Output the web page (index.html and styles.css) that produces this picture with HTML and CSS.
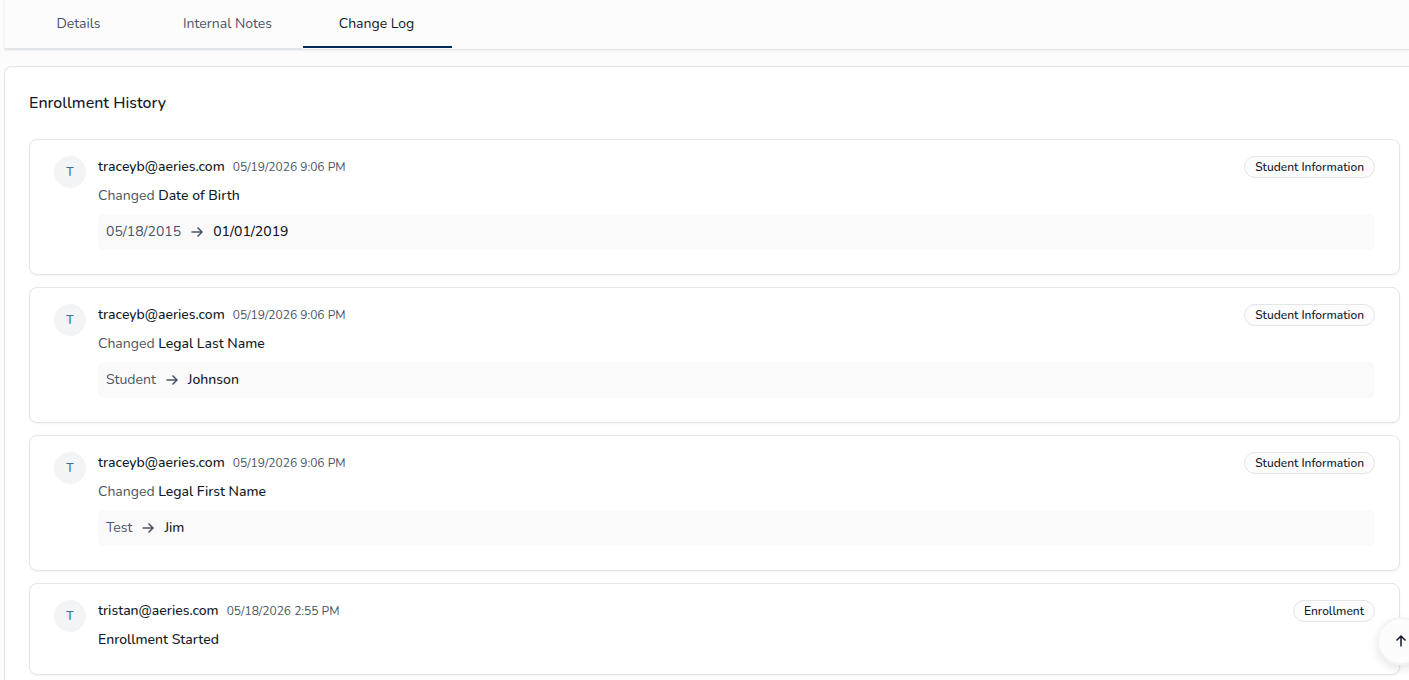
FILE: index.html
```html
<!DOCTYPE html>
<html lang="en">
<head>
  <meta charset="UTF-8">
  <meta name="viewport" content="width=device-width, initial-scale=1.0">
  <title>Change Log</title>
  <link rel="stylesheet" href="styles.css">
</head>
<body>
  <div class="tabs" role="tablist">
    <button class="tab" role="tab">Details</button>
    <button class="tab" role="tab">Internal Notes</button>
    <button class="tab active" role="tab" aria-selected="true">Change Log</button>
  </div>

  <main class="panel">
    <h1>Enrollment History</h1>

    <div class="log">
      <article class="entry">
        <div class="avatar">T</div>
        <div class="entry-body">
          <div class="entry-head">
            <span class="user">traceyb@aeries.com</span>
            <time>05/19/2026 9:06 PM</time>
            <span class="badge">Student Information</span>
          </div>
          <p>Changed <strong>Date of Birth</strong></p>
          <div class="diff">
            <span>05/18/2015</span>
            <svg class="arrow" viewBox="0 0 16 16"><path d="M2.5 8h10.5M8.5 3.5L13 8l-4.500 4.500"/></svg>
            <strong>01/01/2019</strong>
          </div>
        </div>
      </article>

      <article class="entry">
        <div class="avatar">T</div>
        <div class="entry-body">
          <div class="entry-head">
            <span class="user">traceyb@aeries.com</span>
            <time>05/19/2026 9:06 PM</time>
            <span class="badge">Student Information</span>
          </div>
          <p>Changed <strong>Legal Last Name</strong></p>
          <div class="diff">
            <span>Student</span>
            <svg class="arrow" viewBox="0 0 16 16"><path d="M2.5 8h10.5M8.5 3.5L13 8l-4.500 4.500"/></svg>
            <strong>Johnson</strong>
          </div>
        </div>
      </article>

      <article class="entry">
        <div class="avatar">T</div>
        <div class="entry-body">
          <div class="entry-head">
            <span class="user">traceyb@aeries.com</span>
            <time>05/19/2026 9:06 PM</time>
            <span class="badge">Student Information</span>
          </div>
          <p>Changed <strong>Legal First Name</strong></p>
          <div class="diff">
            <span>Test</span>
            <svg class="arrow" viewBox="0 0 16 16"><path d="M2.5 8h10.5M8.5 3.5L13 8l-4.500 4.500"/></svg>
            <strong>Jim</strong>
          </div>
        </div>
      </article>

      <article class="entry">
        <div class="avatar">T</div>
        <div class="entry-body">
          <div class="entry-head">
            <span class="user">tristan@aeries.com</span>
            <time>05/18/2026 2:55 PM</time>
            <span class="badge">Enrollment</span>
          </div>
          <p><strong>Enrollment Started</strong></p>
        </div>
      </article>
    </div>
  </main>

  <button class="to-top" aria-label="Back to top">
    <svg viewBox="0 0 16 16"><path d="M8 13.500V3M3.500 7.500L8 3l4.500 4.500"/></svg>
  </button>

  <script>
    document.querySelector('.to-top').addEventListener('click', function() {
      window.scrollTo({ top: 0, behavior: 'smooth' });
    });
  </script>
</body>
</html>
```
FILE: styles.css
```css
:root {
  --bg: #fcfcfc;
  --card: #fff;
  --text: #111827;
  --muted: #4a5565;
  --border: #e4e5ea;
  --accent: #002b5c;
}

* {
  box-sizing: border-box;
}

body {
  margin: 0;
  padding-left: 4px;
  font-family: "Nunito", "Nunito Sans", Lato, sans-serif;
  font-size: 14px;
  line-height: 20px;
  background: var(--bg);
  color: var(--text);
  overflow-x: hidden;
}

button {
  font: inherit;
  cursor: pointer;
}

.tabs {
  display: flex;
  align-items: flex-start;
  height: 50px;
  border-left: 1px solid #f3f4f6;
  border-bottom: 1px solid #e1e5e9;
  box-shadow: 0 1px 2px rgba(0,0,0,0.06);
}

.tab {
  width: 149px;
  height: 49px;
  padding: 0 2px 1px 0;
  border: none;
  border-bottom: 1px solid #e1e5e9;
  background: none;
  color: var(--muted);
}

.tab.active {
  height: 48px;
  padding: 2px 2px 0 0;
  color: var(--text);
  border-bottom: 2px solid var(--accent);
}

.panel {
  margin-top: 16px;
  padding: 24px 9px 24px 24px;
  background: var(--card);
  border: 1px solid var(--border);
  border-right: none;
  border-radius: 8px 0 0 8px;
}

h1 {
  margin: 0 0 24px;
  font-size: 16px;
  font-weight: 500;
  line-height: 24px;
}

.log {
  display: grid;
  gap: 12px;
}

.entry {
  display: flex;
  gap: 12px;
  padding: 16px 24px 24px;
  background: var(--card);
  border: 1px solid var(--border);
  border-radius: 8px;
  box-shadow: 0 1px 2px rgba(0,0,0,0.05);
}

.avatar {
  display: flex;
  align-items: center;
  justify-content: center;
  width: 32px;
  height: 32px;
  border-radius: 50%;
  background: #f3f4f6;
  color: #40719b;
  font-size: 12px;
  font-weight: 600;
}

.entry-body {
  flex: 1;
}

.entry-head {
  display: flex;
  align-items: center;
  gap: 8px;
}

.user {
  font-weight: 500;
}

time {
  color: var(--muted);
  font-size: 12px;
}

.badge {
  margin-left: auto;
  padding: 0 10px;
  border: 1px solid var(--border);
  border-radius: 11px;
  background: var(--bg);
  font-size: 12px;
  font-weight: 500;
}

p {
  margin: 7px 0 0;
  line-height: 21px;
  color: var(--muted);
}

strong {
  color: var(--text);
  font-weight: 500;
}

.diff {
  display: flex;
  align-items: center;
  gap: 8px;
  margin-top: 8px;
  padding: 8px;
  border-radius: 6px;
  background: #fafafa;
  color: var(--muted);
}

svg {
  width: 16px;
  height: 16px;
  fill: none;
  stroke: currentColor;
  stroke-width: 1.5;
}

.to-top {
  position: fixed;
  right: -16px;
  bottom: 15px;
  display: flex;
  align-items: center;
  justify-content: center;
  width: 48px;
  height: 48px;
  padding: 0;
  border: 2px solid #f3f4f6;
  border-radius: 50%;
  background: var(--bg);
  color: var(--text);
  box-shadow: 0 4px 10px rgba(0,0,0,0.1);
}
```
